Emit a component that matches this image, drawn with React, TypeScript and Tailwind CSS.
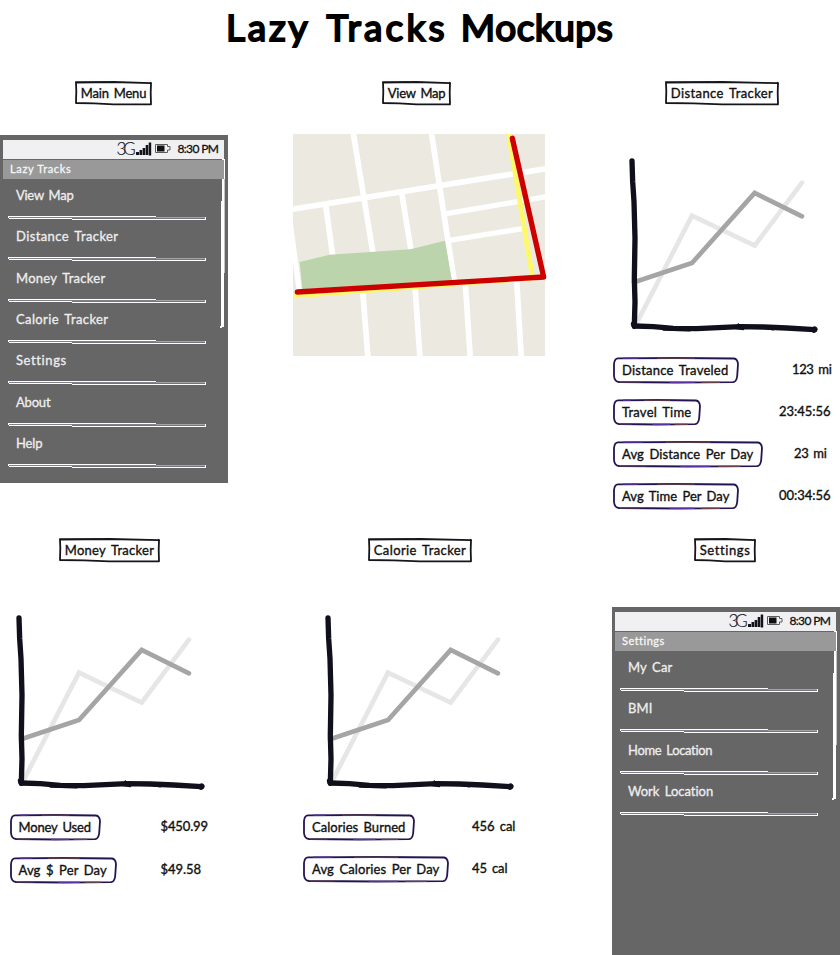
import { useLayoutEffect, useRef } from "react";

/** Text whose letter spacing is spread so that the line is `w` pixels wide. */
function Fit({ text, w, className = "" }: { text: string; w: number; className?: string }) {
  const ref = useRef<HTMLSpanElement>(null);
  useLayoutEffect(() => {
    const el = ref.current;
    if (!el) return;
    el.style.letterSpacing = "0px";
    const natural = el.getBoundingClientRect().width;
    el.style.letterSpacing = `${(w + 0.4 - natural) / text.length}px`;
  }, [text, w]);
  return (
    <span ref={ref} className={`inline-block shrink-0 whitespace-nowrap ${className}`}>
      {text}
    </span>
  );
}

const ink = "text-[13px] leading-[16px] text-[#111] [-webkit-text-stroke:0.35px_#111] [word-spacing:2px]";
const heading = "text-[37px] leading-[48px] text-black [-webkit-text-stroke:2px_#000] [paint-order:stroke] [stroke-linejoin:round]";

function Label({ text, w, tw }: { text: string; w: number; tw: number }) {
  return (
    <div className="relative flex h-6 items-center justify-center" style={{ width: w }}>
      <svg className="absolute inset-0 overflow-visible" width={w} height={24} fill="none" stroke="#15151c">
        <path strokeWidth="1.8" strokeLinejoin="round" d={`M1 1.5L${w * 0.5} 1L${w - 1} 2.2L${w - 1.3} 12L${w - 1} 23.3L${w * 0.5} 23.3L${w * 0.25} 22.3L1 22L1.3 10Z`} />
        <path strokeWidth="1" d={`M0 1H${w * 0.4}M${w - 2} 1L${w} 2.5`} />
      </svg>
      <Fit text={text} w={tw} className={`relative ${ink}`} />
    </div>
  );
}

function Chart() {
  return (
    <svg className="-ml-0.5 block shrink-0" width="228" height="200" viewBox="0 0 684 600" fill="none" strokeLinecap="round">
      <path d="M78 538L246 212L434 302L576 113" stroke="#e6e6e6" strokeWidth="14" />
      <path d="M72 412L246 354L434 144L576 214" stroke="#a5a5a5" strokeWidth="14" />
      <g stroke="#10101c" strokeLinejoin="round">
        <path d="M66 48L68 110L72 170L75 280L73 400L75 470L73 543" strokeWidth="16" />
        <path d="M74 543L130 545L190 550L260 551L325 548L390 545L460 546L530 549L614 554" strokeWidth="16" />
        <path d="M71 537L73 543M614 553L612 555" strokeWidth="17" />
        <path d="M67 50L69 90M160 555L240 557M370 549L400 553M470 550L490 554M385 540L385 537" strokeWidth="5" />
      </g>
    </svg>
  );
}

function Field({ text, w, tw }: { text: string; w: number; tw: number }) {
  return (
    <div className="relative flex h-[26px] items-center pl-[9px]" style={{ width: w }}>
      <svg className="absolute inset-0 overflow-visible" width={w} height={26} fill="none" strokeLinejoin="round">
        <path
          stroke="#241452"
          strokeWidth="1.8"
          d={`M5 1.3L${w * 0.5} 1L${w - 5} 1.5Q${w - 1.5} 2 ${w - 1} 7L${w - 1.8} 19Q${w - 2.5} 25 ${w - 6} 25.2L${w * 0.5} 25.5L6 25Q1.5 24.5 1 19L1 7Q1.5 1.5 5 1.3Z`}
        />
        <path stroke="#65404a" strokeWidth="1.2" d={`M${w * 0.35} 1.2H${w * 0.65}M7 25H${w * 0.22}M${w * 0.7} 25.3H${w * 0.85}`} />
        <path stroke="#5a31a0" strokeWidth="1.2" d={`M${w * 0.45} 25.4H${w * 0.65}M10 1.2H${w * 0.2}`} />
      </svg>
      <Fit text={text} w={tw} className={`relative ${ink}`} />
    </div>
  );
}

type Stat = { label: string; w: number; tw: number; value: string; vw: number; gap: number };

function Stats({ items, tall }: { items: Stat[]; tall?: boolean }) {
  return (
    <div className={`flex flex-col ${tall ? "gap-[17px]" : "gap-4"}`}>
      {items.map((s) => (
        <div key={s.label} className="flex h-[26px] items-center">
          <Field text={s.label} w={s.w} tw={s.tw} />
          <div className="-mt-0.5 flex" style={{ paddingLeft: s.gap }}>
            <Fit text={s.value} w={s.vw} className={ink} />
          </div>
        </div>
      ))}
    </div>
  );
}

function StatusBar() {
  return (
    <div className="ml-[3px] flex h-[19px] w-[221px] items-center bg-[#f0f0f2] pl-[113.5px]">
      <Fit text="3G" w={15.5} className="-mt-0.5 text-[17px] leading-[18px] font-light text-[#1c1c22] [-webkit-text-stroke:0.2px_#1c1c22]" />
      <svg className="ml-[3px] -mt-0.5 shrink-0" width="17" height="14" fill="#15131a">
        <path d="M1 10h3v3H1zM4.5 8h2.6v5H4.5zM7.6 6h2.6v7H7.6zM10.7 3h2.5v10h-2.5zM13.7 0.5h2.5v13h-2.500z" />
      </svg>
      <svg className="ml-[3px] -mt-0.5 shrink-0" width="16" height="11" fill="none">
        <path d="M0.5 1.5H12.5V3.5H15V7H12.5V9.5H0.5Z" stroke="#5b5b5b" />
        <path d="M2 2.500H9.5V8.5H2Z" fill="#111" />
      </svg>
      <div className="-mt-0.5 ml-[6px] flex">
        <Fit text="8:30 PM" w={40.5} className="text-[12px] leading-[16px] text-[#111] [-webkit-text-stroke:0.3px_#111]" />
      </div>
    </div>
  );
}

function Divider() {
  return (
    <svg className="ml-2 block" width="199" height="4" fill="none" shapeRendering="crispEdges">
      <path d="M1 1.5H198" stroke="#858090" />
      <path d="M0 0.5H148M0.5 0V2M1 2.5H64M64 3.5H198M197.5 1V4" stroke="#fff" />
      <path d="M64 2.5H197" stroke="#777480" />
      <path d="M148 1.5H197" stroke="#a5a4a8" />
    </svg>
  );
}

type Item = { text: string; w: number };
const rowHeights = ["h-[41px]", "h-[41px]", "h-[42px]", "h-[41px]", "h-[41px]", "h-[42px]", "h-[41px]"];

function Phone({ title, tw, items }: { title: string; tw: number; items: Item[] }) {
  return (
    <div className="relative h-[348px] w-[228px] bg-[#666] pt-[5px]">
      <StatusBar />
      <div className="mt-px ml-[3px] flex h-[19px] w-[221px] items-center bg-[#999] pl-[7px]">
        <Fit text={title} w={tw} className="-mt-0.5 text-[11px] leading-[14px] text-[#f6f6f6] [-webkit-text-stroke:0.3px_#f6f6f6]" />
      </div>
      <div>
        {items.map((it, i) => (
          <div key={it.text} className={`flex flex-col justify-end ${rowHeights[i]}`}>
            <div className="mb-[13px] flex pl-4">
              <Fit text={it.text} w={it.w} className="text-[13px] leading-[16px] text-[#eee] [-webkit-text-stroke:0.3px_#eee] [word-spacing:2px]" />
            </div>
            <Divider />
          </div>
        ))}
      </div>
      <svg className="absolute top-6 left-[219px]" width="7" height="170" shapeRendering="crispEdges">
        <path d="M3 0H6V114H5V168H2.500V169H1V167H2V42H3V20H5V1H3Z" fill="#fff" />
        <path d="M5 20V114" stroke="#8a8a8a" strokeWidth="0.5" />
      </svg>
    </div>
  );
}

function CityMap() {
  return (
    <svg className="block overflow-visible" width="252" height="222" viewBox="24 27 756 666" fill="none">
      <svg x="24" y="27" width="756" height="666" viewBox="24 27 756 666">
        <rect x="24" y="27" width="756" height="666" fill="#ece9e1" />
        <g stroke="#fff" strokeWidth="17">
          <path d="M204 20L264 384M437 10L508 470M20 253L790 130M122 240L143 392M350 203L378 376" />
          <path d="M485 266L790 214M492 346L712 311M15 290L43 498" strokeWidth="16" />
          <path d="M233 495L249 700M390 485L405 700M541 475L556 700M695 465L709 700" />
        </g>
        <path d="M44 411L134 389L376 373L480 347L501 467L52 493Z" fill="#bbd4ab" />
        <path d="M20 513L780 456M670 20L742 455" stroke="#fdf86c" strokeWidth="15" />
      </svg>
      <path d="M37 501L776 456L682 40" stroke="#cd0000" strokeWidth="16" strokeLinecap="round" strokeLinejoin="round" />
    </svg>
  );
}

export default function App() {
  return (
    <main className="flex h-[955px] w-[840px] flex-col overflow-hidden bg-white font-['Comic_Sans_MS','Chalkboard','Lato',sans-serif]">
      <h1 className="flex h-[81px] shrink-0 gap-[16px] pt-[3px] pl-[226px]">
        <Fit text="Lazy" w={84} className={heading} />
        <Fit text="Tracks" w={121} className={heading} />
        <Fit text="Mockups" w={152} className={`-ml-[3px] ${heading}`} />
      </h1>
      <div className="grid h-[457px] shrink-0 grid-cols-[293px_319px_228px]">
        <section>
          <div className="pl-[75px]"><Label text="Main Menu" w={77} tw={65} /></div>
          <div className="pt-[30px]">
            <Phone
              title="Lazy Tracks"
              tw={61}
              items={[
                { text: "View Map", w: 57 },
                { text: "Distance Tracker", w: 102 },
                { text: "Money Tracker", w: 89 },
                { text: "Calorie Tracker", w: 92 },
                { text: "Settings", w: 50 },
                { text: "About", w: 34 },
                { text: "Help", w: 26 },
              ]}
            />
          </div>
        </section>
        <section>
          <div className="pl-[89px]"><Label text="View Map" w={69} tw={57} /></div>
          <div className="pt-[29px]"><CityMap /></div>
        </section>
        <section>
          <div className="pl-[53px]"><Label text="Distance Tracker" w={114} tw={102} /></div>
          <div className="pt-10"><Chart /></div>
          <div className="pt-3 pl-px">
            <Stats
              items={[
                { label: "Distance Traveled", w: 126, tw: 106, value: "123 mi", vw: 39, gap: 53 },
                { label: "Travel Time", w: 88, tw: 69, value: "23:45:56", vw: 51, gap: 78 },
                { label: "Avg Distance Per Day", w: 150, tw: 131, value: "23 mi", vw: 32, gap: 31 },
                { label: "Avg Time Per Day", w: 126, tw: 107, value: "00:34:56", vw: 51, gap: 40 },
              ]}
            />
          </div>
        </section>
      </div>
      <div className="grid h-[417px] shrink-0 grid-cols-[303px_309px_228px]">
        <section>
          <div className="pl-[59px]"><Label text="Money Tracker" w={101} tw={89} /></div>
          <div className="-ml-px pt-10"><Chart /></div>
          <div className="pt-3 pl-[9.5px]">
            <Stats
              tall
              items={[
                { label: "Money Used", w: 91, tw: 72, value: "$450.99", vw: 47, gap: 60 },
                { label: "Avg $ Per Day", w: 107, tw: 88, value: "$49.58", vw: 40, gap: 44 },
              ]}
            />
          </div>
        </section>
        <section>
          <div className="pl-[65px]"><Label text="Calorie Tracker" w={104} tw={92} /></div>
          <div className="pt-10 pl-[5px]"><Chart /></div>
          <div className="pt-3">
            <Stats
              items={[
                { label: "Calories Burned", w: 112, tw: 93, value: "456 cal", vw: 43, gap: 57 },
                { label: "Avg Calories Per Day", w: 146, tw: 127, value: "45 cal", vw: 35, gap: 23 },
              ]}
            />
          </div>
        </section>
        <section>
          <div className="pl-[82px]"><Label text="Settings" w={62} tw={50} /></div>
          <div className="pt-[45px]">
            <Phone
              title="Settings"
              tw={42}
              items={[
                { text: "My Car", w: 44 },
                { text: "BMI", w: 24 },
                { text: "Home Location", w: 84 },
                { text: "Work Location", w: 85 },
              ]}
            />
          </div>
        </section>
      </div>
    </main>
  );
}
